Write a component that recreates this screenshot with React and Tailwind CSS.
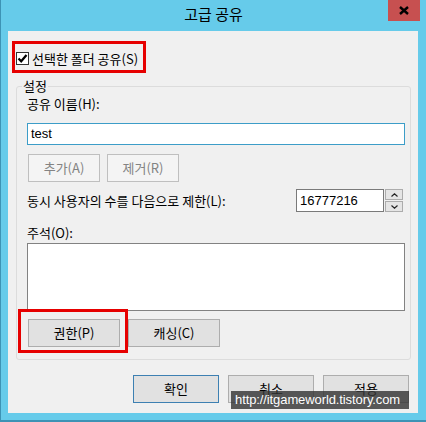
const Btn = ({ children, className = "" }) => (
  <div
    className={`flex items-center justify-center border bg-[#e1e1e1] text-[13px] text-black ${className}`}
  >
    {children}
  </div>
);

const Check = () => (
  <div className="w-[13px] h-[13px] border border-[#333333] bg-white flex items-center justify-center">
    <svg width="11" height="11" viewBox="0 0 11 11">
      <path d="M1.5 5.5 L4.2 8.3 L9.5 2" fill="none" stroke="#000" strokeWidth="2.2" />
    </svg>
  </div>
);

const Spinner = () => (
  <div className="flex flex-col w-[18px] h-[23px] ml-px">
    <div className="h-[11px] border border-[#acacac] bg-[#e5e5e5] flex items-center justify-center">
      <svg width="7" height="4" viewBox="0 0 7 4">
        <path d="M0.5 3.5 L3.5 0.8 L6.5 3.5" fill="none" stroke="#222" strokeWidth="1.2" />
      </svg>
    </div>
    <div className="h-[11px] mt-px border border-[#acacac] bg-[#e5e5e5] flex items-center justify-center">
      <svg width="7" height="4" viewBox="0 0 7 4">
        <path d="M0.5 0.5 L3.5 3.2 L6.5 0.5" fill="none" stroke="#222" strokeWidth="1.2" />
      </svg>
    </div>
  </div>
);

const App = () => {
  return (
    <div className="relative w-[426px] h-[422px] bg-[#66cbea] border-l border-b-2 border-[#3d93b5] font-['Noto_Sans_CJK_KR','Liberation_Sans',sans-serif] text-black overflow-hidden">
      {/* title bar */}
      <div className="relative h-[31px] flex items-center justify-center">
        <span className="text-[15px] leading-[20px] -mt-[3px]">고급 공유</span>
        <div className="absolute right-[6px] top-0 w-[32px] h-[21px] bg-[#c75050] flex items-center justify-center">
          <svg width="10" height="9" viewBox="0 0 10 9">
            <path d="M1 1 L9 8 M9 1 L1 8" stroke="#000" strokeWidth="2.4" />
          </svg>
        </div>
      </div>

      {/* client */}
      <div className="relative ml-[7px] w-[410px] h-[382px] bg-[#f0f0f0] pt-[21px] pl-[8px] pr-[7px]">
        <div className="flex items-center h-[13px] gap-[3px] text-[13px]">
          <Check />
          <span className="leading-[16px]">선택한 폴더 공유(S)</span>
        </div>

        {/* group box */}
        <div className="relative mt-[21px] border border-[#dcdcdc] rounded-[3px] pt-[9px] pl-[10px] pr-[5px] pb-[12px] text-[13px]">
          <span className="absolute -top-[9px] left-[5px] px-[1px] leading-[16px] bg-[#f0f0f0]">설정</span>

          <div className="leading-[16px]">공유 이름(H):</div>
          <div className="mt-[11px] h-[22px] border border-[#3c9dc8] bg-white flex items-center pl-[3px]">
            <span className="font-['Liberation_Sans',sans-serif] text-[13px]">test</span>
          </div>

          <div className="mt-[9px] flex gap-[7px] pl-px">
            <div className="w-[72px] h-[28px] border border-[#bfbfbf] bg-[#f4f4f4] text-[#838383] flex items-center justify-center">추가(A)</div>
            <div className="w-[72px] h-[28px] border border-[#bfbfbf] bg-[#f4f4f4] text-[#838383] flex items-center justify-center">제거(R)</div>
          </div>

          <div className="mt-[7px] h-[23px] flex items-center justify-between pr-[2px]">
            <span className="leading-[16px]">동시 사용자의 수를 다음으로 제한(L):</span>
            <div className="flex items-center">
              <div className="w-[88px] h-[23px] border border-[#7a7a7a] bg-white flex items-center pl-[3px]">
                <span className="font-['Liberation_Sans',sans-serif] text-[13px]">16777216</span>
              </div>
              <Spinner />
            </div>
          </div>

          <div className="mt-[13px] leading-[16px]">주석(O):</div>
          <div className="mt-[2px] h-[68px] border border-[#828282] bg-white" />

          <div className="mt-[8px] flex gap-[8px] pl-px">
            <Btn className="w-[92px] h-[28px] border-[#adadad]">권한(P)</Btn>
            <Btn className="w-[92px] h-[28px] border-[#adadad]">캐싱(C)</Btn>
          </div>

          {/* red annotation */}
          <div className="absolute left-[1px] top-[222px] w-[110px] h-[44px] border-[3px] border-[#e60000]" />
        </div>

        {/* bottom buttons */}
        <div className="mt-[15px] flex justify-end gap-[9px] pr-[2px]">
          <Btn className="w-[86px] h-[28px] border-[#3d80b2]">확인</Btn>
          <Btn className="w-[86px] h-[28px] border-[#adadad]">취소</Btn>
          <Btn className="w-[86px] h-[28px] border-[#adadad]">적용</Btn>
        </div>

        {/* red annotation top */}
        <div className="absolute left-[4px] top-[10px] w-[134px] h-[32px] border-[3px] border-[#e60000]" />
      </div>

      {/* watermark */}
      <div className="absolute left-[230px] top-[391px] w-[178px] h-[18px] bg-[rgba(50,50,50,0.8)] flex items-center pl-[4px]">
        <span className="font-['Liberation_Sans',sans-serif] text-[13px] leading-[16px] text-white tracking-[-0.1px]">
          http://itgameworld.tistory.com
        </span>
      </div>
    </div>
  );
};

export default App;
